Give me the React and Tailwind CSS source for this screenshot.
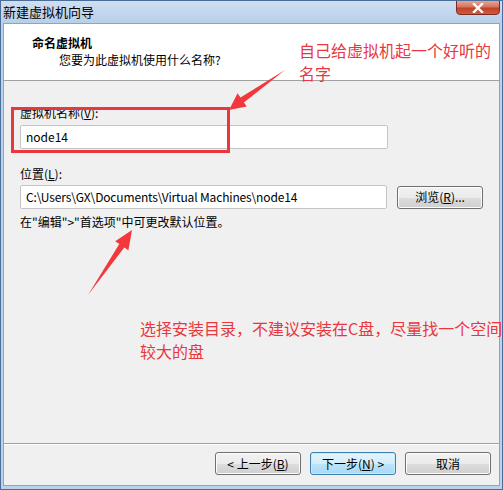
import React from "react";

const ui = { fontFamily: '"Noto Sans CJK SC", "Noto Sans", sans-serif' };

function Btn({ children, primary }) {
  return (
    <button
      className={
        primary
          ? "w-[86px] h-[23px] rounded-[3px] border border-[#3c7fb1] bg-[linear-gradient(#e5f4fc_0%,#d4edfb_50%,#bde4f9_51%,#a7d9f5_100%)] text-[12px] text-black shadow-[inset_0_0_0_1px_#c5ecfd] flex items-center justify-center"
          : "w-[86px] h-[23px] rounded-[3px] border border-[#707070] bg-[linear-gradient(#f2f2f2_0%,#ebebeb_50%,#dddddd_51%,#cfcfcf_100%)] text-[12px] text-black shadow-[inset_0_0_0_1px_#fcfcfc] flex items-center justify-center"
      }
      style={ui}
    >
      {children}
    </button>
  );
}

export default function App() {
  return (
    <div
      className="relative w-[503px] h-[490px] overflow-hidden bg-[#bcd2ea] border border-[#4a6e99] flex flex-col"
      style={ui}
    >
      {/* title bar */}
      <div className="h-[22px] shrink-0 flex items-start justify-between bg-[linear-gradient(#cfdff1,#b8cfe9)]">
        <div className="pl-[2px] pt-[2px] text-[13px] leading-[17px] text-black">新建虚拟机向导</div>
        <div className="mr-[2px] w-[44px] h-[15px] -mt-[1px] rounded-b-[4px] border border-[#7b2c22] bg-[linear-gradient(#e8a493_0%,#d2765f_45%,#c1412a_55%,#d25a3c_100%)] flex items-center justify-center">
          <svg width="12" height="10" viewBox="0 0 12 10">
            <path d="M2 1 L10 9 M10 1 L2 9" stroke="#fff" strokeWidth="2.4" strokeLinecap="square" />
          </svg>
        </div>
      </div>

      {/* client area */}
      <div className="flex-1 mx-[2px] mb-[3px] border border-[#8da5c4] bg-[#f0f0f0] flex flex-col">
        <div className="h-[57px] shrink-0 bg-white border-b border-[#a0a0a0] pt-[11px] pl-[28px]">
          <div className="text-[12px] font-bold leading-[16px] text-black">命名虚拟机</div>
          <div className="pl-[27px] text-[12px] leading-[18px] text-black">您要为此虚拟机使用什么名称?</div>
        </div>

        <div className="flex-1 px-[16px] pt-[24px]">
          <div className="text-[12px] leading-[16px] text-black">
            虚拟机名称(<span className="underline">V</span>):
          </div>
          <div className="mt-[4px] w-[368px] h-[24px] bg-white border border-[#c5c5c5] rounded-[2px] pl-[5px] text-[12px] leading-[22px] text-black">
            node14
          </div>

          <div className="mt-[17px] text-[12px] leading-[16px] text-black">
            位置(<span className="underline">L</span>):
          </div>
          <div className="mt-[3px] flex items-center gap-[10px]">
            <div className="w-[368px] h-[24px] bg-white border border-[#c5c5c5] rounded-[2px] pl-[5px] text-[12px] leading-[22px] text-black tracking-[-0.15px]">
              C:\Users\GX\Documents\Virtual Machines\node14
            </div>
            <Btn>
              浏览(<span className="underline">R</span>)...
            </Btn>
          </div>
          <div className="mt-[5px] text-[12px] leading-[16px] text-black">
            在"编辑"&gt;"首选项"中可更改默认位置。
          </div>
        </div>

        <div className="h-[42px] shrink-0 border-t border-[#a0a0a0] shadow-[inset_0_1px_0_#fff] flex items-center justify-end gap-[9px] pr-[8px] pb-[2px]">
          <Btn>
            &lt; 上一步(<span className="underline">B</span>)
          </Btn>
          <Btn primary>
            下一步(<span className="underline">N</span>) &gt;
          </Btn>
          <Btn>取消</Btn>
        </div>
      </div>

      {/* annotations */}
      <div className="absolute left-[10px] top-[106px] w-[219px] h-[46px] border-[3px] border-[#e8373f]" />
      <div className="absolute left-[298px] top-[38px] flex flex-col text-[16px] leading-[23px] text-[#e8373f] whitespace-nowrap">
        <div>自己给虚拟机起一个好听的</div>
        <div>名字</div>
      </div>
      <div className="absolute left-[139px] top-[316px] flex flex-col text-[16px] leading-[23px] text-[#e8373f] whitespace-nowrap">
        <div>选择安装目录，不建议安装在C盘，尽量找一个空间</div>
        <div>较大的盘</div>
      </div>
      <svg className="absolute left-0 top-0 pointer-events-none" width="503" height="490">
        <polygon
          points="284,69 242.9,101.4 245.8,105.5 228,109 236.6,92.3 239.5,96.4"
          fill="#f2383c"
        />
        <polygon
          points="87,294 123.3,246.5 127.4,249.3 131,229 114.2,240.3 118.3,243.1"
          fill="#f2383c"
        />
      </svg>
    </div>
  );
}
